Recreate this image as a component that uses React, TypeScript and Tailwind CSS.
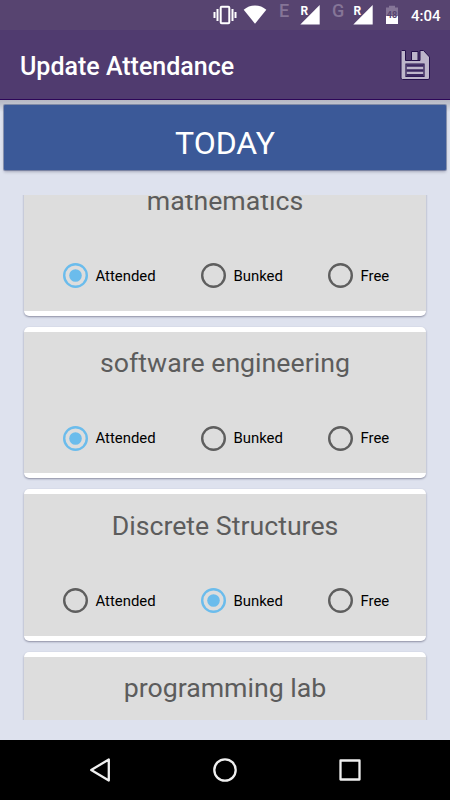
import { useState } from 'react'
import clsx from 'clsx'

type Status = 'Attended' | 'Bunked' | 'Free'

interface Subject {
  name: string
  status: Status | null
}

const SUBJECTS: Subject[] = [
  { name: 'mathematics', status: 'Attended' },
  { name: 'software engineering', status: 'Attended' },
  { name: 'Discrete Structures', status: 'Bunked' },
  { name: 'programming lab', status: null },
]

const OPTIONS: { label: Status; width: string }[] = [
  { label: 'Attended', width: 'w-[138px]' },
  { label: 'Bunked', width: 'w-[127px]' },
  { label: 'Free', width: 'w-[70px]' },
]

function Signal({ network, className }: { network: string; className: string }) {
  return (
    <div className={clsx('relative flex', className)}>
      <span className="w-[21px] text-[18px] leading-[12px] font-medium text-[#857597]">{network}</span>
      <svg className="h-5 w-5 shrink-0" viewBox="0 0 20 20">
        <path d="M19.7 0v19.5H.3z" fill="#fff" />
      </svg>
      <span className="absolute left-[21.5px] top-[1px] text-[12px] leading-[11px] font-bold text-white">R</span>
    </div>
  )
}

function StatusBar() {
  return (
    <div className="flex h-[30px] items-start bg-[#574470] pl-[213px] text-white">
      <svg className="mt-[5px] h-5 w-6 shrink-0" viewBox="0 0 24 20">
        <rect x="7.7" y="1.7" width="8.6" height="16.6" rx="1" fill="none" stroke="#fff" strokeWidth="2" />
        <path d="M4.5 4v12M19.5 4v12" stroke="#fff" strokeWidth="2" />
        <path d="M1.5 7v6M22.5 7v6" stroke="#fff" strokeWidth="2" />
      </svg>
      <svg className="ml-[6px] mt-[5px] h-5 w-6 shrink-0" viewBox="0 0 24 20">
        <path d="M12 18.7.7 4.7C3.8 2 7.7.5 12 .5s8.2 1.5 11.3 4.2z" fill="#fff" />
      </svg>
      <Signal network="E" className="ml-[12px] mt-[5px]" />
      <Signal network="G" className="ml-[12px] mt-[5px]" />
      <div className="relative ml-[13px] mt-[5px] h-5 w-3 shrink-0">
        <svg className="h-5 w-3" viewBox="0 0 12 20">
          <path d="M0 2.5h3V.8h6v1.7h3V11H0z" fill="#857597" />
          <path d="M0 11h12v8H0z" fill="#fff" />
        </svg>
        <span className="absolute inset-x-0 top-[6px] text-center text-[9px] leading-[8px] font-bold text-[#574470]">
          48
        </span>
      </div>
      <span className="ml-[13px] mt-[6px] text-[15px] leading-[20px] font-medium">4:04</span>
    </div>
  )
}

function SaveIcon() {
  return (
    <svg className="h-[30px] w-[30px]" viewBox="0 0 30 30">
      <path
        d="M2 .5h3.5v10H20V.5h3.5l6 6.5v21a1.5 1.5 0 0 1-1.5 1.5H2.5A1.5 1.5 0 0 1 1 28V1.5z"
        fill="#bdb5ca"
        stroke="#24104a"
        strokeWidth="1"
      />
      <path d="M11.5 1.5H18v9h-6.5z" fill="#bdb5ca" stroke="#24104a" strokeWidth="1" />
      <path d="M6 14h18v12.5H6z" fill="#bdb5ca" stroke="#24104a" strokeWidth="1.2" />
      <path d="M6.5 15.5h17M6.5 20.5h17M6.5 25.2h17" stroke="#3a2660" strokeWidth="2.6" />
    </svg>
  )
}

function Radio({ checked }: { checked: boolean }) {
  return (
    <svg className="h-[25px] w-[25px] shrink-0" viewBox="0 0 25 25">
      <circle cx="12.5" cy="12.5" r="11.3" fill="none" stroke={checked ? '#6bbcec' : '#5e5e5e'} strokeWidth="2.4" />
      {checked && <circle cx="12.5" cy="12.5" r="6.3" fill="#6bbcec" />}
    </svg>
  )
}

function SubjectCard({ subject, onChange }: { subject: Subject; onChange: (status: Status) => void }) {
  return (
    <div className="h-[151.5px] shrink-0 rounded-[5px] bg-white py-[5px] shadow-[0_1px_2px_rgba(40,40,70,0.45)]">
      <div className="h-full bg-[#dddddd] pt-[14.5px]">
        <h2 className="text-center text-[26.7px] leading-[34px] whitespace-nowrap text-[#5c5c5c]">{subject.name}</h2>
        <div className="mt-[44.5px] flex pl-[39px]">
          {OPTIONS.map(({ label, width }) => (
            <button key={label} onClick={() => onChange(label)} className={clsx('flex items-center', width)}>
              <Radio checked={subject.status === label} />
              <span className="ml-[7.5px] pt-[1.5px] text-[14.9px] leading-[25px] text-black">{label}</span>
            </button>
          ))}
        </div>
      </div>
    </div>
  )
}

function NavBar() {
  return (
    <div className="flex h-[60px] items-center gap-[101px] bg-black pl-[88px]">
      <svg className="h-6 w-6" viewBox="0 0 24 24" fill="none" stroke="#f0f0f0" strokeWidth="2.3" strokeLinejoin="round">
        <path d="M20.8 1.5v21L3.2 12z" />
      </svg>
      <svg className="h-6 w-6" viewBox="0 0 24 24" fill="none" stroke="#f0f0f0" strokeWidth="2.3">
        <circle cx="12" cy="12" r="10.7" />
      </svg>
      <svg className="h-6 w-6" viewBox="0 0 24 24" fill="none" stroke="#f0f0f0" strokeWidth="2.3" strokeLinejoin="round">
        <rect x="2.5" y="2.5" width="19" height="19" />
      </svg>
    </div>
  )
}

export default function App() {
  const [subjects, setSubjects] = useState(SUBJECTS)

  const setStatus = (name: string, status: Status) => {
    setSubjects((prev) => prev.map((s) => (s.name === name ? { ...s, status } : s)))
  }

  return (
    <div className="flex h-[800px] w-[450px] flex-col overflow-hidden bg-[#dee2ee] font-[Roboto,sans-serif]">
      <StatusBar />
      <header className="flex h-[70px] items-center justify-between border-b border-[#2d0658] bg-[#503b6f] pl-5 pr-5">
        <h1 className="pt-[4px] text-[25px] font-medium text-white">Update Attendance</h1>
        <button aria-label="Save">
          <SaveIcon />
        </button>
      </header>
      <div className="bg-linear-to-b from-[#b6b7c3] from-0% via-[#bfc2cd] via-[4px] to-[#dee2ee] to-[12px] px-1 pt-[5px]">
        <button className="block h-[65px] w-full rounded-[1px] bg-[#3b5998] pt-[11px] text-[32px] leading-[52px] text-white shadow-[0_0_0_1px_rgba(70,85,130,0.5),0_2px_3px_rgba(40,40,70,0.3)]">
          TODAY
        </button>
      </div>
      <main className="mt-[25px] mb-5 flex min-h-0 flex-1 flex-col overflow-hidden px-6">
        <div className="-mt-[30.6px] flex flex-col gap-[11px]">
          {subjects.map((s) => (
            <SubjectCard key={s.name} subject={s} onChange={(status) => setStatus(s.name, status)} />
          ))}
        </div>
      </main>
      <NavBar />
    </div>
  )
}
